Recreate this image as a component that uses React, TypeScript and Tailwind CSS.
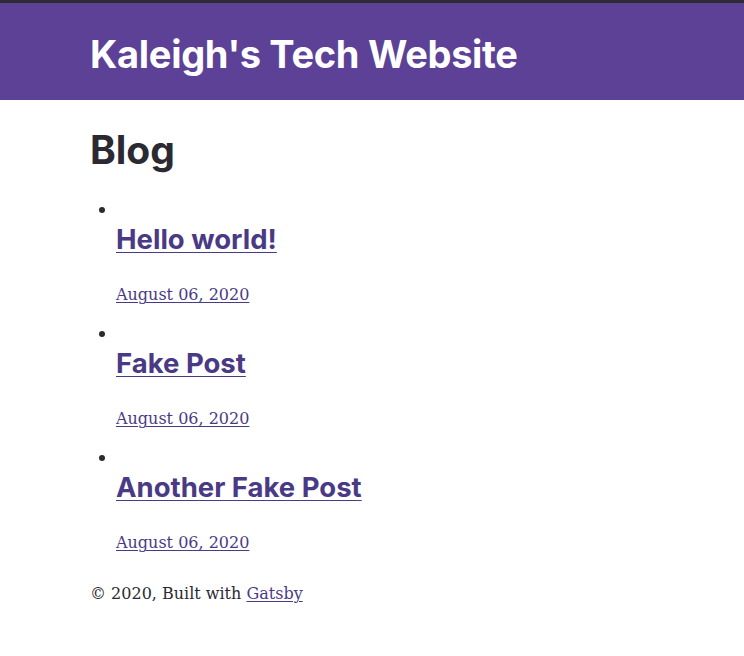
const posts = [
  { title: 'Hello world!', date: 'August 06, 2020' },
  { title: 'Fake Post', date: 'August 06, 2020' },
  { title: 'Another Fake Post', date: 'August 06, 2020' },
];

export default function App() {
  return (
    <div className="min-h-[656px] bg-white font-['DejaVu_Serif',serif] text-[#2b2a33]">
      <div className="h-[3px] bg-[#2f2b34]" />
      <header className="h-[97px] bg-[#5c4196] px-[90px] flex items-center">
        <h1 className="font-['Inter',sans-serif] font-bold text-[38px] leading-none text-white tracking-[-0.3px] pt-[4px]">
          Kaleigh's Tech Website
        </h1>
      </header>

      <main className="px-[90px]">
        <h2 className="font-['Inter',sans-serif] font-bold text-[39px] leading-[46px] mt-[27px] text-[#2b2a33]">
          Blog
        </h2>

        <ul className="mt-[25px]">
          {posts.map((post) => (
            <li key={post.title} className="flex flex-col">
              <div className="h-[24px] flex items-center pl-[9px]">
                <span className="w-[6px] h-[6px] rounded-full bg-[#2b2a33]" />
              </div>
              <div className="pl-[26px]">
                <h3 className="font-['Inter',sans-serif] font-bold text-[27.5px] leading-[34px]">
                  <a href="#" className="text-[#4a3a85] underline underline-offset-[3px] decoration-[1px]">
                    {post.title}
                  </a>
                </h3>
                <p className="mt-[22px] mb-[10px] text-[16px] leading-[34px]">
                  <a href="#" className="text-[#4a3a85] underline underline-offset-[2px] decoration-[1px]">
                    {post.date}
                  </a>
                </p>
              </div>
            </li>
          ))}
        </ul>

        <footer className="text-[16px] leading-[28px] mt-[10px]">
          © 2020, Built with{' '}
          <a href="#" className="text-[#4a3a85] underline underline-offset-[2px] decoration-[1px]">
            Gatsby
          </a>
        </footer>
      </main>
    </div>
  );
}
